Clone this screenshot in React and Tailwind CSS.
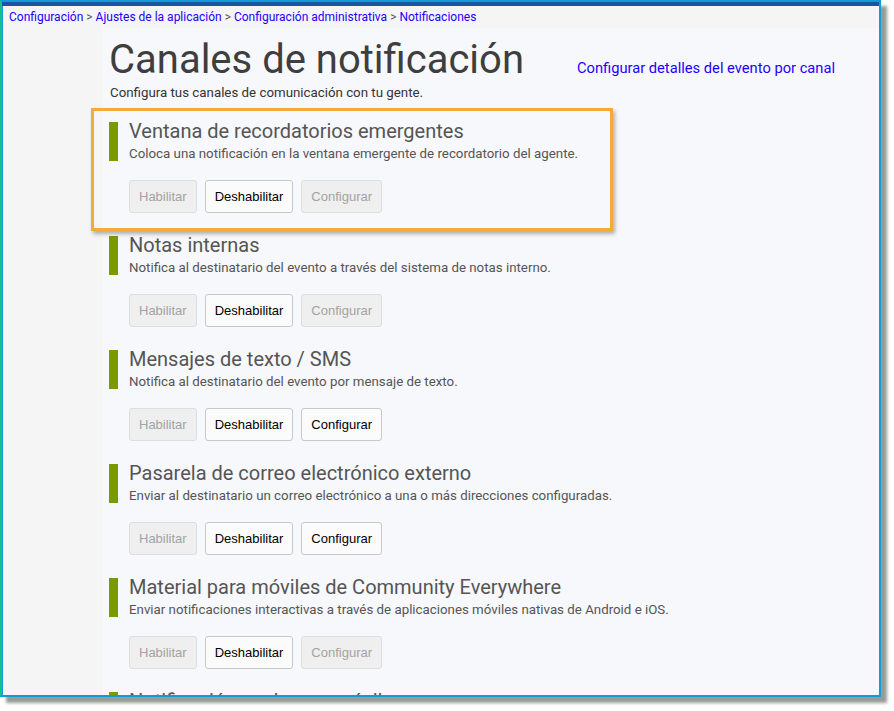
const crumbs = ['Configuración', 'Ajustes de la aplicación', 'Configuración administrativa', 'Notificaciones'];

const channels = [
  {
    title: 'Ventana de recordatorios emergentes',
    text: 'Coloca una notificación en la ventana emergente de recordatorio del agente.',
    configurable: false,
  },
  {
    title: 'Notas internas',
    text: 'Notifica al destinatario del evento a través del sistema de notas interno.',
    configurable: false,
  },
  {
    title: 'Mensajes de texto / SMS',
    text: 'Notifica al destinatario del evento por mensaje de texto.',
    configurable: true,
  },
  {
    title: 'Pasarela de correo electrónico externo',
    text: 'Enviar al destinatario un correo electrónico a una o más direcciones configuradas.',
    configurable: true,
  },
  {
    title: 'Material para móviles de Community Everywhere',
    text: 'Enviar notificaciones interactivas a través de aplicaciones móviles nativas de Android e iOS.',
    configurable: false,
  },
  {
    title: 'Notificación push para móviles',
    text: 'Enviar notificaciones push a dispositivos móviles.',
    configurable: false,
  },
];

const Button = ({ label, enabled }) => (
  <button
    className={
      enabled
        ? 'h-[33px] px-[9px] rounded-[3px] border border-[#c8c8c8] bg-[#fbfbfb] text-[13px] text-black'
        : 'h-[33px] px-[9px] rounded-[3px] border border-[#dedede] bg-[#efefef] text-[13px] text-[#a3a3a3]'
    }
    style={{ fontFamily: '"Liberation Sans", Arial, sans-serif' }}
  >
    {label}
  </button>
);

const Channel = ({ channel }) => (
  <div className="h-[114px] pt-[4px]">
    <div className="flex gap-[11px]">
      <div className="w-[9px] h-[39px] bg-[#7a9a01]" />
      <div className="-mt-[3px]">
        <div className="text-[20px] leading-[25px] text-[#555]">{channel.title}</div>
        <div className="text-[13.3px] leading-[19px] text-[#555]">{channel.text}</div>
      </div>
    </div>
    <div className="flex gap-[8px] pl-[20px] mt-[17px]">
      <Button label="Habilitar" enabled={false} />
      <Button label="Deshabilitar" enabled />
      <Button label="Configurar" enabled={channel.configurable} />
    </div>
  </div>
);

export default function App() {
  return (
    <div className="w-[894px] h-[711px] bg-white" style={{ fontFamily: 'Roboto, "Liberation Sans", sans-serif' }}>
      <div className="w-[881px] h-[697px] border-2 border-[#1399d6] border-l-[#14c08c] shadow-[6px_6px_3px_rgba(0,0,0,0.4)] overflow-hidden flex flex-col">
        <div className="h-[4px] bg-[#1a55a4] shrink-0" />
        <div className="flex-1 flex flex-col border-l border-[#1399d6] min-h-0">
          <div className="h-[22px] shrink-0 bg-[#f5f5f5] flex items-center pl-[6px] text-[12px]">
            {crumbs.map((c, i) => (
              <span key={c} className="flex items-center">
                {i > 0 && <span className="text-[#555] px-[3px]">&gt;</span>}
                <a className="text-[#1f00ff]">{c}</a>
              </span>
            ))}
          </div>
          <div className="flex-1 flex min-h-0">
            <div className="w-[100px] bg-[#f5f5f5] shrink-0" />
            <div className="flex-1 bg-[#f7f8fc] pl-[6px] relative">
              <div className="flex items-start justify-between pr-[44px]">
                <div>
                  <h1 className="text-[40px] leading-[48px] text-[#3e3e3e] mt-[8px]">Canales de notificación</h1>
                  <p className="text-[13.3px] leading-[18px] text-[#333] pl-[1px]">
                    Configura tus canales de comunicación con tu gente.
                  </p>
                </div>
                <a className="text-[14.7px] text-[#1f00ff] mt-[29px]">Configurar detalles del evento por canal</a>
              </div>
              <div className="mt-[16px]">
                {channels.map((ch) => (
                  <Channel key={ch.title} channel={ch} />
                ))}
              </div>
              {/* highlight around the first channel */}
              <div className="absolute left-[-12px] top-[80px] w-[522px] h-[123px] border-[3px] border-[#f6aa3c] shadow-[2px_3px_4px_rgba(0,0,0,0.3)] pointer-events-none" />
            </div>
          </div>
        </div>
      </div>
    </div>
  );
}
